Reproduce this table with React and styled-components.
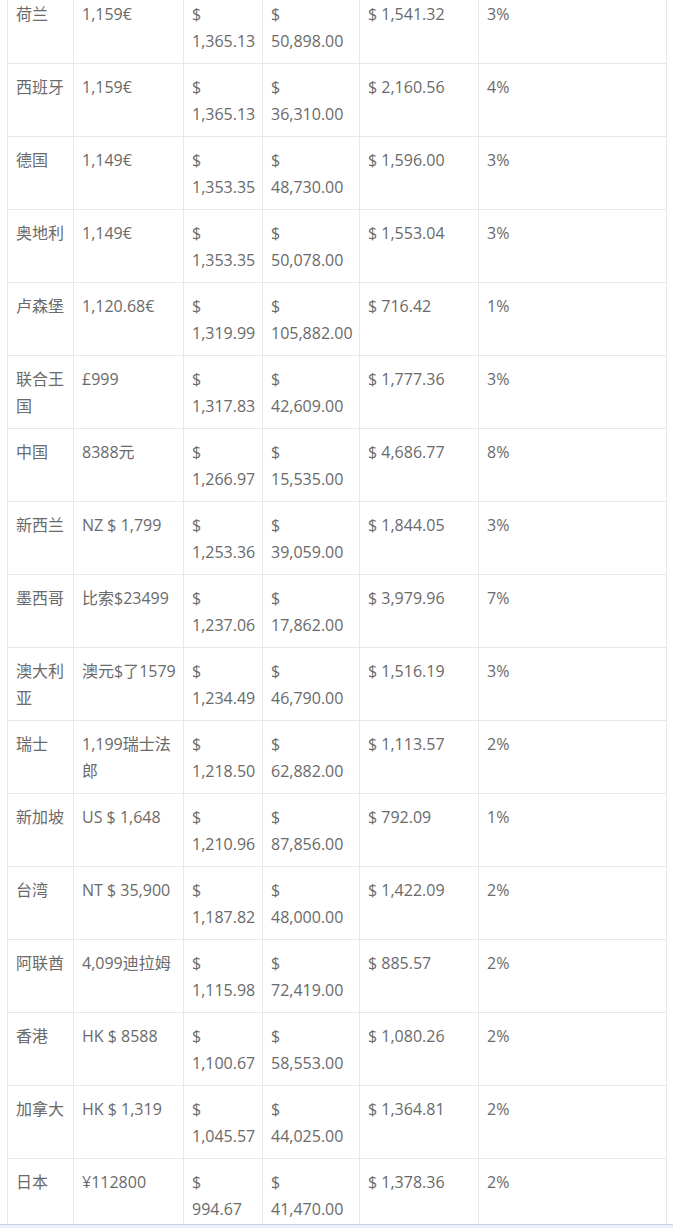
import React from "react";
import styled, { createGlobalStyle } from "styled-components";

const Global = createGlobalStyle`
  html, body { margin: 0; padding: 0; background: #fff; }
  body { overflow: hidden; }
`;

const Page = styled.div`
  padding-left: 7px;
  height: 1228px;
  overflow: hidden;
`;

const Table = styled.table`
  margin-top: -10px;
  width: 659px;
  table-layout: fixed;
  border-collapse: collapse;
  font-family: "Open Sans", "Noto Sans CJK SC", sans-serif;
  font-size: 16px;
  line-height: 27px;
  color: #6a6a6a;
`;

const Cell = styled.td`
  border: 1px solid #e8e8e8;
  padding: 10px 4px 8px 8px;
  vertical-align: top;
  word-break: break-all;
  overflow-wrap: anywhere;
  box-sizing: border-box;
  height: 73px;
`;

const Wrap = styled.span`
  word-break: normal;
  overflow-wrap: normal;
`;

const BottomBar = styled.div`
  position: fixed;
  left: 0;
  right: 0;
  bottom: 0;
  height: 3px;
  border-top: 1px solid #c7d4e6;
  background: #edf2f9;
`;

const widths = [66, 110, 79, 97, 119, 188];

const rows = [
  ["荷兰", "1,159€", "1,365.13", "50,898.00", "$ 1,541.32", "3%"],
  ["西班牙", "1,159€", "1,365.13", "36,310.00", "$ 2,160.56", "4%"],
  ["德国", "1,149€", "1,353.35", "48,730.00", "$ 1,596.00", "3%"],
  ["奥地利", "1,149€", "1,353.35", "50,078.00", "$ 1,553.04", "3%"],
  ["卢森堡", "1,120.68€", "1,319.99", "105,882.00", "$ 716.42", "1%"],
  ["联合王国", "£999", "1,317.83", "42,609.00", "$ 1,777.36", "3%"],
  ["中国", "8388元", "1,266.97", "15,535.00", "$ 4,686.77", "8%"],
  ["新西兰", "NZ $ 1,799", "1,253.36", "39,059.00", "$ 1,844.05", "3%"],
  ["墨西哥", "比索$23499", "1,237.06", "17,862.00", "$ 3,979.96", "7%"],
  ["澳大利亚", "澳元$了1579", "1,234.49", "46,790.00", "$ 1,516.19", "3%"],
  ["瑞士", "1,199瑞士法郎", "1,218.50", "62,882.00", "$ 1,113.57", "2%"],
  ["新加坡", "US $ 1,648", "1,210.96", "87,856.00", "$ 792.09", "1%"],
  ["台湾", "NT $ 35,900", "1,187.82", "48,000.00", "$ 1,422.09", "2%"],
  ["阿联酋", "4,099迪拉姆", "1,115.98", "72,419.00", "$ 885.57", "2%"],
  ["香港", "HK $ 8588", "1,100.67", "58,553.00", "$ 1,080.26", "2%"],
  ["加拿大", "HK $ 1,319", "1,045.57", "44,025.00", "$ 1,364.81", "2%"],
  ["日本", "¥112800", "994.67", "41,470.00", "$ 1,378.36", "2%"],
];

export default function App() {
  return (
    <Page>
      <Global />
      <Table>
        <colgroup>
          {widths.map((w, i) => (
            <col key={i} style={{ width: w }} />
          ))}
        </colgroup>
        <tbody>
          {rows.map((r, i) => (
            <tr key={i}>
              <Cell>{r[0]}</Cell>
              <Cell>{r[1]}</Cell>
              <Cell>
                $<br />
                {r[2]}
              </Cell>
              <Cell>
                $<br />
                {r[3]}
              </Cell>
              <Cell>
                <Wrap>{r[4]}</Wrap>
              </Cell>
              <Cell>{r[5]}</Cell>
            </tr>
          ))}
        </tbody>
      </Table>
      <BottomBar />
    </Page>
  );
}
